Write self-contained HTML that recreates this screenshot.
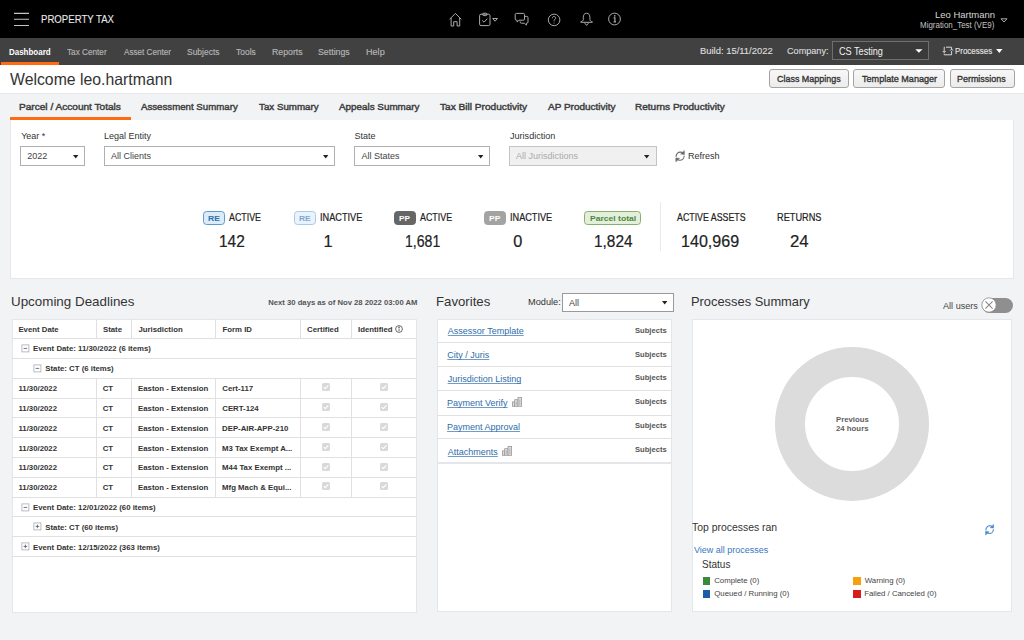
<!DOCTYPE html>
<html><head><meta charset="utf-8"><style>
html,body{margin:0;padding:0;width:1024px;height:640px;overflow:hidden;background:#f2f3f5;font-family:"Liberation Sans",sans-serif}
.r{position:absolute;display:block}
.t{position:absolute;white-space:nowrap;font-family:"Liberation Sans",sans-serif}
</style></head><body>
<div class="r" style="left:0px;top:0px;width:1024px;height:38px;background:#000"></div>
<svg class="r" style="left:13px;top:11px" width="17" height="16" viewBox="0 0 17 16" stroke="#c4c4c4" stroke-width="1.1"><path d="M1 2.4 H16 M1 8.3 H16 M1 14.5 H16"/></svg>
<span class="t" style="left:40.98px;top:15.00px;font-size:10.0px;line-height:10.0px;color:#e8e8e8;font-weight:400;transform:scaleX(0.9606);transform-origin:0 0;-webkit-text-stroke:0.1px #e8e8e8">PROPERTY TAX</span>
<svg class="r" style="left:448px;top:12px" width="16" height="16" viewBox="0 0 16 16" fill="none" stroke="#a9a9a9" stroke-width="1" stroke-linejoin="round"><path d="M1.5 7.3 L7.4 1.4 L13.3 7.3 M3.1 5.9 V14 H5.7 V9.7 H9.1 V14 H11.7 V5.9"/></svg>
<svg class="r" style="left:477px;top:12px" width="24" height="16" viewBox="0 0 24 16" fill="none" stroke="#a9a9a9" stroke-width="1"><rect x="2.6" y="2.2" width="10.4" height="11.4" rx="1.4"/><rect x="5.6" y="1.2" width="4.4" height="2.4" rx="1.2"/><path d="M5.2 8.4 L7 10.2 L10.3 6.7"/><path d="M15.7 6.5 H20.5 L18.1 9.2 Z"/></svg>
<svg class="r" style="left:514px;top:12px" width="16" height="16" viewBox="0 0 16 16" fill="none" stroke="#a9a9a9" stroke-width="1" stroke-linejoin="round"><path d="M2.4 1.4 H9.3 Q10.5 1.4 10.5 2.6 V7 Q10.5 8.2 9.3 8.2 H5 L3.1 10.1 V8.2 H2.4 Q1.2 8.2 1.2 7 V2.6 Q1.2 1.4 2.4 1.4 Z"/><path d="M10.9 4.4 H12.8 Q14 4.4 14 5.6 V10 Q14 11.2 12.8 11.2 H12.4 V13.2 L10.4 11.2 H7.4 Q6.2 11.2 6.2 10 V9.4"/></svg>
<svg class="r" style="left:546px;top:12px" width="16" height="16" viewBox="0 0 16 16" fill="none" stroke="#a9a9a9" stroke-width="1"><circle cx="8.1" cy="7.9" r="5.8"/><path d="M6.4 6.2 C6.4 5 7.1 4.5 8 4.5 C9 4.5 9.7 5.2 9.7 6 C9.7 7.1 8.2 7.4 8.1 8.6 V9.3"/><circle cx="8.1" cy="11" r="0.55" fill="#a9a9a9" stroke="none"/></svg>
<svg class="r" style="left:579px;top:12px" width="16" height="16" viewBox="0 0 16 16" fill="none" stroke="#a9a9a9" stroke-width="1" stroke-linejoin="round"><path d="M7.6 1.2 C5.2 1.2 4.3 3.2 4.3 5.4 V7.6 C4.3 8.6 3.2 9.4 2 9.7 C1.4 9.9 1.6 10.3 2.2 10.3 H13 C13.6 10.3 13.8 9.9 13.2 9.7 C12 9.4 10.9 8.6 10.9 7.6 V5.4 C10.9 3.2 10 1.2 7.6 1.2 Z"/><path d="M6 10.4 V11.4 L7.6 13.4 L9.2 11.4 V10.4"/></svg>
<svg class="r" style="left:607px;top:12px" width="16" height="16" viewBox="0 0 16 16" fill="none" stroke="#a9a9a9" stroke-width="1"><circle cx="7.5" cy="7" r="5.9"/><path d="M6.6 5.9 H7.9 V9.9 M6.6 9.9 H9" stroke-width="1.2"/><circle cx="7.7" cy="3.9" r="0.8" fill="#a9a9a9" stroke="none"/></svg>
<span class="t" style="left:934.54px;top:11.00px;font-size:9.3px;line-height:9.3px;color:#d6d6d6;font-weight:400;transform:scaleX(1.0197);transform-origin:0 0;">Leo Hartmann</span>
<span class="t" style="left:920.16px;top:21.00px;font-size:8.3px;line-height:8.3px;color:#c2c2c2;font-weight:400;transform:scaleX(0.9591);transform-origin:0 0;">Migration_Test (VE9)</span>
<svg class="r" style="left:1000px;top:18px" width="8" height="5" viewBox="0 0 8 5" fill="none" stroke="#aaa" stroke-width="1"><path d="M1 0.8 H7 L4 4 Z"/></svg>
<div class="r" style="left:0px;top:38px;width:1024px;height:27px;background:#414141"></div>
<span class="t" style="left:8.88px;top:47.00px;font-size:9.6px;line-height:9.6px;color:#fff;font-weight:700;transform:scaleX(0.8309);transform-origin:0 0;">Dashboard</span>
<div class="r" style="left:1px;top:62px;width:58px;height:3px;background:#ff6a13"></div>
<span class="t" style="left:66.94px;top:47.00px;font-size:9.6px;line-height:9.6px;color:#b6b6b6;font-weight:400;transform:scaleX(0.8550);transform-origin:0 0;-webkit-text-stroke:0.15px #b6b6b6">Tax Center</span>
<span class="t" style="left:123.60px;top:47.00px;font-size:9.6px;line-height:9.6px;color:#b6b6b6;font-weight:400;transform:scaleX(0.8482);transform-origin:0 0;-webkit-text-stroke:0.15px #b6b6b6">Asset Center</span>
<span class="t" style="left:187.12px;top:47.00px;font-size:9.6px;line-height:9.6px;color:#b6b6b6;font-weight:400;transform:scaleX(0.8822);transform-origin:0 0;-webkit-text-stroke:0.15px #b6b6b6">Subjects</span>
<span class="t" style="left:236.13px;top:47.00px;font-size:9.6px;line-height:9.6px;color:#b6b6b6;font-weight:400;transform:scaleX(0.8818);transform-origin:0 0;-webkit-text-stroke:0.15px #b6b6b6">Tools</span>
<span class="t" style="left:271.70px;top:47.00px;font-size:9.6px;line-height:9.6px;color:#b6b6b6;font-weight:400;transform:scaleX(0.9109);transform-origin:0 0;-webkit-text-stroke:0.15px #b6b6b6">Reports</span>
<span class="t" style="left:318.20px;top:47.00px;font-size:9.6px;line-height:9.6px;color:#b6b6b6;font-weight:400;transform:scaleX(0.9164);transform-origin:0 0;-webkit-text-stroke:0.15px #b6b6b6">Settings</span>
<span class="t" style="left:365.77px;top:47.00px;font-size:9.6px;line-height:9.6px;color:#b6b6b6;font-weight:400;transform:scaleX(0.9475);transform-origin:0 0;-webkit-text-stroke:0.15px #b6b6b6">Help</span>
<span class="t" style="left:700.04px;top:46.00px;font-size:9.4px;line-height:9.4px;color:#dadada;font-weight:400;transform:scaleX(1.0049);transform-origin:0 0;-webkit-text-stroke:0.15px #dadada">Build: 15/11/2022</span>
<span class="t" style="left:787.04px;top:46.00px;font-size:9.4px;line-height:9.4px;color:#dadada;font-weight:400;transform:scaleX(0.9711);transform-origin:0 0;-webkit-text-stroke:0.15px #dadada">Company:</span>
<div class="r" style="left:832px;top:41px;width:97px;height:19px;background:#3a3a3a;border:1px solid #6e6e6e;box-sizing:border-box"></div>
<span class="t" style="left:839.14px;top:46.00px;font-size:10.6px;line-height:10.6px;color:#f2f2f2;font-weight:400;transform:scaleX(0.8611);transform-origin:0 0;">CS Testing</span>
<svg class="r" style="left:914.5px;top:48.5px" width="8" height="4" viewBox="0 0 8 4"><path d="M0.3 0.2 H7.5 L3.9 3.8 Z" fill="#fff"/></svg>
<svg class="r" style="left:941px;top:45px" width="13" height="12" viewBox="0 0 13 12" fill="none" stroke="#d8d8d8" stroke-width="1"><path d="M5 2.2 H10.6 V4.6 M10.6 6 V9.8 H3.2 V8.6 M3.2 7.2 V2.2 H3.8"/><path d="M1.8 6 L3.2 7.6 L4.6 6 M9.2 5.6 L10.6 4 L12 5.6"/></svg>
<span class="t" style="left:955.06px;top:46.00px;font-size:9.5px;line-height:9.5px;color:#e0e0e0;font-weight:400;transform:scaleX(0.8366);transform-origin:0 0;-webkit-text-stroke:0.15px #e8e8e8">Processes</span>
<svg class="r" style="left:996px;top:48.8px" width="7" height="4" viewBox="0 0 7 4"><path d="M0.1 0 H6.5 L3.3 3.9 Z" fill="#fff"/></svg>
<div class="r" style="left:0px;top:65px;width:1024px;height:28px;background:#fff"></div>
<span class="t" style="left:9.72px;top:71.00px;font-size:16.5px;line-height:16.5px;color:#333;font-weight:400;transform:scaleX(0.9583);transform-origin:0 0;">Welcome leo.hartmann</span>
<div class="r" style="left:769px;top:69.2px;width:80px;height:18.799999999999997px;background:linear-gradient(#f7f7f7,#ececec);border:1px solid #a3a3a3;border-radius:3px;box-sizing:border-box"></div>
<span class="t" style="left:777.05px;top:74.00px;font-size:9.8px;line-height:9.8px;color:#333;font-weight:400;transform:scaleX(0.9130);transform-origin:0 0;-webkit-text-stroke:0.35px #333">Class Mappings</span>
<div class="r" style="left:852.8px;top:69.2px;width:92.30000000000007px;height:18.799999999999997px;background:linear-gradient(#f7f7f7,#ececec);border:1px solid #a3a3a3;border-radius:3px;box-sizing:border-box"></div>
<span class="t" style="left:861.62px;top:74.00px;font-size:9.8px;line-height:9.8px;color:#333;font-weight:400;transform:scaleX(0.9257);transform-origin:0 0;-webkit-text-stroke:0.35px #333">Template Manager</span>
<div class="r" style="left:950px;top:69.2px;width:64.70000000000005px;height:18.799999999999997px;background:linear-gradient(#f7f7f7,#ececec);border:1px solid #a3a3a3;border-radius:3px;box-sizing:border-box"></div>
<span class="t" style="left:957.28px;top:74.00px;font-size:9.8px;line-height:9.8px;color:#333;font-weight:400;transform:scaleX(0.9132);transform-origin:0 0;-webkit-text-stroke:0.35px #333">Permissions</span>
<div class="r" style="left:0px;top:93px;width:1024px;height:547px;background:#f2f3f5"></div>
<div class="r" style="left:0px;top:93px;width:1024px;height:1px;background:#e9eaed"></div>
<span class="t" style="left:18.99px;top:102.00px;font-size:9.8px;line-height:9.8px;color:#404040;font-weight:400;transform:scaleX(1.0301);transform-origin:0 0;-webkit-text-stroke:0.45px #404040">Parcel / Account Totals</span>
<span class="t" style="left:141.40px;top:102.00px;font-size:9.8px;line-height:9.8px;color:#404040;font-weight:400;transform:scaleX(0.9873);transform-origin:0 0;-webkit-text-stroke:0.45px #404040">Assessment Summary</span>
<span class="t" style="left:258.80px;top:102.00px;font-size:9.8px;line-height:9.8px;color:#404040;font-weight:400;transform:scaleX(0.9961);transform-origin:0 0;-webkit-text-stroke:0.45px #404040">Tax Summary</span>
<span class="t" style="left:339.00px;top:102.00px;font-size:9.8px;line-height:9.8px;color:#404040;font-weight:400;transform:scaleX(1.0054);transform-origin:0 0;-webkit-text-stroke:0.45px #404040">Appeals Summary</span>
<span class="t" style="left:439.80px;top:102.00px;font-size:9.8px;line-height:9.8px;color:#404040;font-weight:400;transform:scaleX(1.0329);transform-origin:0 0;-webkit-text-stroke:0.45px #404040">Tax Bill Productivity</span>
<span class="t" style="left:547.50px;top:102.00px;font-size:9.8px;line-height:9.8px;color:#404040;font-weight:400;transform:scaleX(1.0189);transform-origin:0 0;-webkit-text-stroke:0.45px #404040">AP Productivity</span>
<span class="t" style="left:634.70px;top:102.00px;font-size:9.8px;line-height:9.8px;color:#404040;font-weight:400;transform:scaleX(1.0239);transform-origin:0 0;-webkit-text-stroke:0.45px #404040">Returns Productivity</span>
<div class="r" style="left:9.6px;top:116.8px;width:121.70000000000002px;height:3.0px;background:#ff6a13"></div>
<div class="r" style="left:10px;top:120px;width:1004px;height:159px;background:#fff;border:1px solid #e6e7ea;border-top:none;box-sizing:border-box"></div>
<span class="t" style="left:21.17px;top:132.00px;font-size:9.0px;line-height:9.0px;color:#333;font-weight:400;">Year *</span>
<span class="t" style="left:103.98px;top:132.00px;font-size:9.0px;line-height:9.0px;color:#333;font-weight:400;">Legal Entity</span>
<span class="t" style="left:354.40px;top:132.00px;font-size:9.0px;line-height:9.0px;color:#333;font-weight:400;">State</span>
<span class="t" style="left:509.66px;top:132.00px;font-size:9.0px;line-height:9.0px;color:#333;font-weight:400;transform:scaleX(1.0072);transform-origin:0 0;">Jurisdiction</span>
<div class="r" style="left:20px;top:146px;width:65px;height:20px;background:#fff;border:1px solid #b0b0b0;box-sizing:border-box"></div>
<span class="t" style="left:27.15px;top:152.00px;font-size:9.0px;line-height:9.0px;color:#444;font-weight:400;">2022</span>
<svg class="r" style="left:72.6px;top:155px" width="6" height="4" viewBox="0 0 6 4"><path d="M0 0 H5.4 L2.7 3.4 Z" fill="#222"/></svg>
<div class="r" style="left:104px;top:146px;width:231px;height:20px;background:#fff;border:1px solid #b0b0b0;box-sizing:border-box"></div>
<span class="t" style="left:111.00px;top:152.00px;font-size:9.0px;line-height:9.0px;color:#444;font-weight:400;">All Clients</span>
<svg class="r" style="left:322.5px;top:155px" width="6" height="4" viewBox="0 0 6 4"><path d="M0 0 H5.4 L2.7 3.4 Z" fill="#222"/></svg>
<div class="r" style="left:354px;top:146px;width:136px;height:20px;background:#fff;border:1px solid #b0b0b0;box-sizing:border-box"></div>
<span class="t" style="left:361.40px;top:152.00px;font-size:9.0px;line-height:9.0px;color:#444;font-weight:400;">All States</span>
<svg class="r" style="left:477.8px;top:155px" width="6" height="4" viewBox="0 0 6 4"><path d="M0 0 H5.4 L2.7 3.4 Z" fill="#222"/></svg>
<div class="r" style="left:509px;top:146px;width:148px;height:20px;background:#f0f0f0;border:1px solid #c4c4c4;box-sizing:border-box"></div>
<span class="t" style="left:516.00px;top:152.00px;font-size:9.0px;line-height:9.0px;color:#aaa;font-weight:400;">All Jurisdictions</span>
<svg class="r" style="left:644px;top:155px" width="6" height="4" viewBox="0 0 6 4"><path d="M0 0 H5.4 L2.7 3.4 Z" fill="#222"/></svg>
<svg class="r" style="left:672px;top:148px" width="16" height="16" viewBox="0 0 16 16" fill="none" stroke="#6a6a6a" stroke-width="1.1" stroke-linecap="round"><path d="M4.1 8.4 C4.1 6 6 4.1 8.3 4.1 C9.5 4.1 10.5 4.6 11.2 5.3"/><path d="M12.3 2.9 L12.4 6.4 L9 6.1 Z" fill="#6a6a6a" stroke-width="0.6" stroke-linejoin="round"/><path d="M12.1 8 C12.1 10.4 10.2 12.3 7.9 12.3 C6.7 12.3 5.7 11.8 5 11.1"/><path d="M3.9 13.5 L3.8 10 L7.2 10.3 Z" fill="#6a6a6a" stroke-width="0.6" stroke-linejoin="round"/></svg>
<span class="t" style="left:687.98px;top:152.00px;font-size:9.0px;line-height:9.0px;color:#333;font-weight:400;transform:scaleX(1.0035);transform-origin:0 0;">Refresh</span>
<div class="r" style="left:202.7px;top:211px;width:22.30000000000001px;height:14px;background:#dcebf8;border:1px solid #5a9bd4;border-radius:3.5px;box-sizing:border-box"></div>
<span class="t" style="left:207.94px;top:215.00px;font-size:7.2px;line-height:7.2px;color:#2f6ea8;font-weight:700;transform:scaleX(1.1889);transform-origin:0 0;">RE</span>
<div class="r" style="left:293.6px;top:211px;width:22.099999999999966px;height:14px;background:#eaf3fb;border:1px solid #a8cbe9;border-radius:3.5px;box-sizing:border-box"></div>
<span class="t" style="left:298.85px;top:215.00px;font-size:7.2px;line-height:7.2px;color:#79a9d6;font-weight:700;transform:scaleX(1.1673);transform-origin:0 0;">RE</span>
<div class="r" style="left:394.3px;top:211px;width:21.69999999999999px;height:14px;background:#666;border:1px solid #666;border-radius:3.5px;box-sizing:border-box"></div>
<span class="t" style="left:399.26px;top:215.00px;font-size:7.2px;line-height:7.2px;color:#fff;font-weight:700;transform:scaleX(1.1471);transform-origin:0 0;">PP</span>
<div class="r" style="left:484px;top:211px;width:22px;height:14px;background:#a3a3a3;border:1px solid #a3a3a3;border-radius:3.5px;box-sizing:border-box"></div>
<span class="t" style="left:488.95px;top:215.00px;font-size:7.2px;line-height:7.2px;color:#fff;font-weight:700;transform:scaleX(1.1808);transform-origin:0 0;">PP</span>
<div class="r" style="left:584.3px;top:211.2px;width:56.90000000000009px;height:14.0px;background:#e4eeda;border:1px solid #84b173;border-radius:3.5px;box-sizing:border-box"></div>
<span class="t" style="left:589.74px;top:215.00px;font-size:8.0px;line-height:8.0px;color:#4b8a3c;font-weight:700;transform:scaleX(1.0694);transform-origin:0 0;">Parcel total</span>
<span class="t" style="left:229.40px;top:213.00px;font-size:10.4px;line-height:10.4px;color:#222;font-weight:400;transform:scaleX(0.8511);transform-origin:0 0;-webkit-text-stroke:0.2px #222">ACTIVE</span>
<span class="t" style="left:319.97px;top:213.00px;font-size:10.4px;line-height:10.4px;color:#222;font-weight:400;transform:scaleX(0.8843);transform-origin:0 0;-webkit-text-stroke:0.2px #222">INACTIVE</span>
<span class="t" style="left:420.30px;top:213.00px;font-size:10.4px;line-height:10.4px;color:#222;font-weight:400;transform:scaleX(0.8565);transform-origin:0 0;-webkit-text-stroke:0.2px #222">ACTIVE</span>
<span class="t" style="left:510.18px;top:213.00px;font-size:10.4px;line-height:10.4px;color:#222;font-weight:400;transform:scaleX(0.8800);transform-origin:0 0;-webkit-text-stroke:0.2px #222">INACTIVE</span>
<span class="t" style="left:676.70px;top:213.00px;font-size:10.4px;line-height:10.4px;color:#222;font-weight:400;transform:scaleX(0.8490);transform-origin:0 0;-webkit-text-stroke:0.2px #222">ACTIVE ASSETS</span>
<span class="t" style="left:776.96px;top:213.00px;font-size:10.4px;line-height:10.4px;color:#222;font-weight:400;transform:scaleX(0.8849);transform-origin:0 0;-webkit-text-stroke:0.2px #222">RETURNS</span>
<span class="t" style="left:218.84px;top:233.00px;font-size:16.3px;line-height:16.3px;color:#222;font-weight:400;transform:scaleX(0.9481);transform-origin:0 0;-webkit-text-stroke:0.2px #222">142</span>
<span class="t" style="left:323.38px;top:233.00px;font-size:16.3px;line-height:16.3px;color:#222;font-weight:400;-webkit-text-stroke:0.2px #222">1</span>
<span class="t" style="left:404.94px;top:233.00px;font-size:16.3px;line-height:16.3px;color:#222;font-weight:400;transform:scaleX(0.8661);transform-origin:0 0;-webkit-text-stroke:0.2px #222">1,681</span>
<span class="t" style="left:513.35px;top:233.00px;font-size:16.3px;line-height:16.3px;color:#222;font-weight:400;-webkit-text-stroke:0.2px #222">0</span>
<span class="t" style="left:594.34px;top:233.00px;font-size:16.3px;line-height:16.3px;color:#222;font-weight:400;transform:scaleX(0.9452);transform-origin:0 0;-webkit-text-stroke:0.2px #222">1,824</span>
<span class="t" style="left:681.49px;top:233.00px;font-size:16.3px;line-height:16.3px;color:#222;font-weight:400;transform:scaleX(0.9883);transform-origin:0 0;-webkit-text-stroke:0.2px #222">140,969</span>
<span class="t" style="left:789.86px;top:233.00px;font-size:16.3px;line-height:16.3px;color:#222;font-weight:400;transform:scaleX(1.0304);transform-origin:0 0;-webkit-text-stroke:0.2px #222">24</span>
<div class="r" style="left:660px;top:202px;width:1px;height:49px;background:#e8e9ed"></div>
<span class="t" style="left:11.00px;top:296.00px;font-size:12.8px;line-height:12.8px;color:#333;font-weight:400;transform:scaleX(1.0457);transform-origin:0 0;">Upcoming Deadlines</span>
<span class="t" style="left:268.20px;top:299.00px;font-size:7.7px;line-height:7.7px;color:#555;font-weight:700;">Next 30 days as of Nov 28 2022 03:00 AM</span>
<div class="r" style="left:11.5px;top:319px;width:405px;height:293.5px;background:#fff;border:1px solid #e4e6ea;box-sizing:border-box"></div>
<div class="r" style="left:12px;top:338.1px;width:404.5px;height:1.0px;background:#e0e0e0"></div>
<div class="r" style="left:12px;top:357.92px;width:404.5px;height:1.0px;background:#e0e0e0"></div>
<div class="r" style="left:12px;top:377.74px;width:404.5px;height:1.0px;background:#e0e0e0"></div>
<div class="r" style="left:12px;top:397.56px;width:404.5px;height:1.0px;background:#e0e0e0"></div>
<div class="r" style="left:12px;top:417.38px;width:404.5px;height:1.0px;background:#e0e0e0"></div>
<div class="r" style="left:12px;top:437.20000000000005px;width:404.5px;height:1.0px;background:#e0e0e0"></div>
<div class="r" style="left:12px;top:457.02000000000004px;width:404.5px;height:1.0px;background:#e0e0e0"></div>
<div class="r" style="left:12px;top:476.84000000000003px;width:404.5px;height:1.0px;background:#e0e0e0"></div>
<div class="r" style="left:12px;top:496.66px;width:404.5px;height:1.0px;background:#e0e0e0"></div>
<div class="r" style="left:12px;top:516.48px;width:404.5px;height:1.0px;background:#e0e0e0"></div>
<div class="r" style="left:12px;top:536.3px;width:404.5px;height:1.0px;background:#e0e0e0"></div>
<div class="r" style="left:12px;top:556.12px;width:404.5px;height:1.0px;background:#e0e0e0"></div>
<div class="r" style="left:96px;top:319px;width:1px;height:19px;background:#e0e0e0"></div>
<div class="r" style="left:96px;top:377.74px;width:1px;height:118.92000000000002px;background:#e0e0e0"></div>
<div class="r" style="left:131px;top:319px;width:1px;height:19px;background:#e0e0e0"></div>
<div class="r" style="left:131px;top:377.74px;width:1px;height:118.92000000000002px;background:#e0e0e0"></div>
<div class="r" style="left:215px;top:319px;width:1px;height:19px;background:#e0e0e0"></div>
<div class="r" style="left:215px;top:377.74px;width:1px;height:118.92000000000002px;background:#e0e0e0"></div>
<div class="r" style="left:300px;top:319px;width:1px;height:19px;background:#e0e0e0"></div>
<div class="r" style="left:300px;top:377.74px;width:1px;height:118.92000000000002px;background:#e0e0e0"></div>
<div class="r" style="left:351px;top:319px;width:1px;height:19px;background:#e0e0e0"></div>
<div class="r" style="left:351px;top:377.74px;width:1px;height:118.92000000000002px;background:#e0e0e0"></div>
<span class="t" style="left:18.39px;top:326.00px;font-size:7.8px;line-height:7.8px;color:#333;font-weight:700;">Event Date</span>
<span class="t" style="left:102.97px;top:326.00px;font-size:7.8px;line-height:7.8px;color:#333;font-weight:700;">State</span>
<span class="t" style="left:138.48px;top:326.00px;font-size:7.8px;line-height:7.8px;color:#333;font-weight:700;">Jurisdiction</span>
<span class="t" style="left:222.49px;top:326.00px;font-size:7.8px;line-height:7.8px;color:#333;font-weight:700;">Form ID</span>
<span class="t" style="left:307.09px;top:326.00px;font-size:7.8px;line-height:7.8px;color:#333;font-weight:700;">Certified</span>
<span class="t" style="left:357.99px;top:326.00px;font-size:7.8px;line-height:7.8px;color:#333;font-weight:700;">Identified</span>
<svg class="r" style="left:395px;top:324.5px" width="8" height="8" viewBox="0 0 8 8" fill="none" stroke="#444" stroke-width="0.8"><circle cx="4" cy="4" r="3.4"/><path d="M4 3.4 V6.2"/><circle cx="4" cy="2.2" r="0.4" fill="#444"/></svg>
<svg class="r" style="left:21px;top:344.1px" width="9" height="9" viewBox="0 0 9 9" fill="none" stroke-width="0.8"><rect x="0.9" y="0.9" width="7" height="7" stroke="#a9a9b9"/><path d="M2.6 4.4 H6.2" stroke="#555"/></svg>
<span class="t" style="left:32.99px;top:345.00px;font-size:7.8px;line-height:7.8px;color:#333;font-weight:700;">Event Date: 11/30/2022 (6 items)</span>
<svg class="r" style="left:33px;top:363.92px" width="9" height="9" viewBox="0 0 9 9" fill="none" stroke-width="0.8"><rect x="0.9" y="0.9" width="7" height="7" stroke="#a9a9b9"/><path d="M2.6 4.4 H6.2" stroke="#555"/></svg>
<span class="t" style="left:45.27px;top:365.00px;font-size:7.8px;line-height:7.8px;color:#333;font-weight:700;">State: CT (6 items)</span>
<span class="t" style="left:18.43px;top:385.00px;font-size:7.8px;line-height:7.8px;color:#333;font-weight:700;">11/30/2022</span>
<span class="t" style="left:102.69px;top:385.00px;font-size:7.8px;line-height:7.8px;color:#333;font-weight:700;">CT</span>
<span class="t" style="left:138.09px;top:385.00px;font-size:7.8px;line-height:7.8px;color:#333;font-weight:700;">Easton - Extension</span>
<span class="t" style="left:222.29px;top:385.00px;font-size:7.8px;line-height:7.8px;color:#333;font-weight:700;">Cert-117</span>
<div class="r" style="left:322px;top:383.25px;width:8px;height:8.0px;background:#d9d9d9;border-radius:1.5px"></div>
<svg class="r" style="left:322px;top:383.25px" width="8" height="8" viewBox="0 0 8 8" fill="none" stroke="#fff" stroke-width="1.1"><path d="M1.7 4.1 L3.3 5.7 L6.3 2.4"/></svg>
<div class="r" style="left:380px;top:383.25px;width:8px;height:8.0px;background:#d9d9d9;border-radius:1.5px"></div>
<svg class="r" style="left:380px;top:383.25px" width="8" height="8" viewBox="0 0 8 8" fill="none" stroke="#fff" stroke-width="1.1"><path d="M1.7 4.1 L3.3 5.7 L6.3 2.4"/></svg>
<span class="t" style="left:18.43px;top:405.00px;font-size:7.8px;line-height:7.8px;color:#333;font-weight:700;">11/30/2022</span>
<span class="t" style="left:102.69px;top:405.00px;font-size:7.8px;line-height:7.8px;color:#333;font-weight:700;">CT</span>
<span class="t" style="left:138.09px;top:405.00px;font-size:7.8px;line-height:7.8px;color:#333;font-weight:700;">Easton - Extension</span>
<span class="t" style="left:222.29px;top:405.00px;font-size:7.8px;line-height:7.8px;color:#333;font-weight:700;">CERT-124</span>
<div class="r" style="left:322px;top:403.07000000000005px;width:8px;height:8.0px;background:#d9d9d9;border-radius:1.5px"></div>
<svg class="r" style="left:322px;top:403.07000000000005px" width="8" height="8" viewBox="0 0 8 8" fill="none" stroke="#fff" stroke-width="1.1"><path d="M1.7 4.1 L3.3 5.7 L6.3 2.4"/></svg>
<div class="r" style="left:380px;top:403.07000000000005px;width:8px;height:8.0px;background:#d9d9d9;border-radius:1.5px"></div>
<svg class="r" style="left:380px;top:403.07000000000005px" width="8" height="8" viewBox="0 0 8 8" fill="none" stroke="#fff" stroke-width="1.1"><path d="M1.7 4.1 L3.3 5.7 L6.3 2.4"/></svg>
<span class="t" style="left:18.43px;top:425.00px;font-size:7.8px;line-height:7.8px;color:#333;font-weight:700;">11/30/2022</span>
<span class="t" style="left:102.69px;top:425.00px;font-size:7.8px;line-height:7.8px;color:#333;font-weight:700;">CT</span>
<span class="t" style="left:138.09px;top:425.00px;font-size:7.8px;line-height:7.8px;color:#333;font-weight:700;">Easton - Extension</span>
<span class="t" style="left:222.09px;top:425.00px;font-size:7.8px;line-height:7.8px;color:#333;font-weight:700;">DEP-AIR-APP-210</span>
<div class="r" style="left:322px;top:422.89000000000004px;width:8px;height:8.0px;background:#d9d9d9;border-radius:1.5px"></div>
<svg class="r" style="left:322px;top:422.89000000000004px" width="8" height="8" viewBox="0 0 8 8" fill="none" stroke="#fff" stroke-width="1.1"><path d="M1.7 4.1 L3.3 5.7 L6.3 2.4"/></svg>
<div class="r" style="left:380px;top:422.89000000000004px;width:8px;height:8.0px;background:#d9d9d9;border-radius:1.5px"></div>
<svg class="r" style="left:380px;top:422.89000000000004px" width="8" height="8" viewBox="0 0 8 8" fill="none" stroke="#fff" stroke-width="1.1"><path d="M1.7 4.1 L3.3 5.7 L6.3 2.4"/></svg>
<span class="t" style="left:18.43px;top:445.00px;font-size:7.8px;line-height:7.8px;color:#333;font-weight:700;">11/30/2022</span>
<span class="t" style="left:102.69px;top:445.00px;font-size:7.8px;line-height:7.8px;color:#333;font-weight:700;">CT</span>
<span class="t" style="left:138.09px;top:445.00px;font-size:7.8px;line-height:7.8px;color:#333;font-weight:700;">Easton - Extension</span>
<span class="t" style="left:222.09px;top:445.00px;font-size:7.8px;line-height:7.8px;color:#333;font-weight:700;">M3 Tax Exempt A...</span>
<div class="r" style="left:322px;top:442.71000000000004px;width:8px;height:8.0px;background:#d9d9d9;border-radius:1.5px"></div>
<svg class="r" style="left:322px;top:442.71000000000004px" width="8" height="8" viewBox="0 0 8 8" fill="none" stroke="#fff" stroke-width="1.1"><path d="M1.7 4.1 L3.3 5.7 L6.3 2.4"/></svg>
<div class="r" style="left:380px;top:442.71000000000004px;width:8px;height:8.0px;background:#d9d9d9;border-radius:1.5px"></div>
<svg class="r" style="left:380px;top:442.71000000000004px" width="8" height="8" viewBox="0 0 8 8" fill="none" stroke="#fff" stroke-width="1.1"><path d="M1.7 4.1 L3.3 5.7 L6.3 2.4"/></svg>
<span class="t" style="left:18.43px;top:464.00px;font-size:7.8px;line-height:7.8px;color:#333;font-weight:700;">11/30/2022</span>
<span class="t" style="left:102.69px;top:464.00px;font-size:7.8px;line-height:7.8px;color:#333;font-weight:700;">CT</span>
<span class="t" style="left:138.09px;top:464.00px;font-size:7.8px;line-height:7.8px;color:#333;font-weight:700;">Easton - Extension</span>
<span class="t" style="left:222.09px;top:464.00px;font-size:7.8px;line-height:7.8px;color:#333;font-weight:700;">M44 Tax Exempt ...</span>
<div class="r" style="left:322px;top:462.5300000000001px;width:8px;height:8.0px;background:#d9d9d9;border-radius:1.5px"></div>
<svg class="r" style="left:322px;top:462.5300000000001px" width="8" height="8" viewBox="0 0 8 8" fill="none" stroke="#fff" stroke-width="1.1"><path d="M1.7 4.1 L3.3 5.7 L6.3 2.4"/></svg>
<div class="r" style="left:380px;top:462.5300000000001px;width:8px;height:8.0px;background:#d9d9d9;border-radius:1.5px"></div>
<svg class="r" style="left:380px;top:462.5300000000001px" width="8" height="8" viewBox="0 0 8 8" fill="none" stroke="#fff" stroke-width="1.1"><path d="M1.7 4.1 L3.3 5.7 L6.3 2.4"/></svg>
<span class="t" style="left:18.43px;top:484.00px;font-size:7.8px;line-height:7.8px;color:#333;font-weight:700;">11/30/2022</span>
<span class="t" style="left:102.69px;top:484.00px;font-size:7.8px;line-height:7.8px;color:#333;font-weight:700;">CT</span>
<span class="t" style="left:138.09px;top:484.00px;font-size:7.8px;line-height:7.8px;color:#333;font-weight:700;">Easton - Extension</span>
<span class="t" style="left:222.09px;top:484.00px;font-size:7.8px;line-height:7.8px;color:#333;font-weight:700;">Mfg Mach &amp; Equi...</span>
<div class="r" style="left:322px;top:482.35px;width:8px;height:8.0px;background:#d9d9d9;border-radius:1.5px"></div>
<svg class="r" style="left:322px;top:482.35px" width="8" height="8" viewBox="0 0 8 8" fill="none" stroke="#fff" stroke-width="1.1"><path d="M1.7 4.1 L3.3 5.7 L6.3 2.4"/></svg>
<div class="r" style="left:380px;top:482.35px;width:8px;height:8.0px;background:#d9d9d9;border-radius:1.5px"></div>
<svg class="r" style="left:380px;top:482.35px" width="8" height="8" viewBox="0 0 8 8" fill="none" stroke="#fff" stroke-width="1.1"><path d="M1.7 4.1 L3.3 5.7 L6.3 2.4"/></svg>
<svg class="r" style="left:21px;top:502.66px" width="9" height="9" viewBox="0 0 9 9" fill="none" stroke-width="0.8"><rect x="0.9" y="0.9" width="7" height="7" stroke="#a9a9b9"/><path d="M2.6 4.4 H6.2" stroke="#555"/></svg>
<span class="t" style="left:32.99px;top:504.00px;font-size:7.8px;line-height:7.8px;color:#333;font-weight:700;">Event Date: 12/01/2022 (60 items)</span>
<svg class="r" style="left:33px;top:522.48px" width="9" height="9" viewBox="0 0 9 9" fill="none" stroke-width="0.8"><rect x="0.9" y="0.9" width="7" height="7" stroke="#a9a9b9"/><path d="M2.6 4.4 H6.2 M4.4 2.6 V6.2" stroke="#555"/></svg>
<span class="t" style="left:45.27px;top:524.00px;font-size:7.8px;line-height:7.8px;color:#333;font-weight:700;">State: CT (60 items)</span>
<svg class="r" style="left:21px;top:542.3px" width="9" height="9" viewBox="0 0 9 9" fill="none" stroke-width="0.8"><rect x="0.9" y="0.9" width="7" height="7" stroke="#a9a9b9"/><path d="M2.6 4.4 H6.2 M4.4 2.6 V6.2" stroke="#555"/></svg>
<span class="t" style="left:32.99px;top:544.00px;font-size:7.8px;line-height:7.8px;color:#333;font-weight:700;">Event Date: 12/15/2022 (363 items)</span>
<span class="t" style="left:435.94px;top:296.00px;font-size:12.6px;line-height:12.6px;color:#333;font-weight:400;transform:scaleX(1.0469);transform-origin:0 0;">Favorites</span>
<span class="t" style="left:528.06px;top:298.00px;font-size:9.0px;line-height:9.0px;color:#333;font-weight:400;transform:scaleX(1.0241);transform-origin:0 0;">Module:</span>
<div class="r" style="left:562px;top:293.2px;width:111.60000000000002px;height:18.80000000000001px;background:#fff;border:1px solid #9a9a9a;box-sizing:border-box"></div>
<span class="t" style="left:569.00px;top:299.00px;font-size:9.0px;line-height:9.0px;color:#444;font-weight:400;">All</span>
<svg class="r" style="left:661.5px;top:301.4px" width="6" height="4" viewBox="0 0 6 4"><path d="M0 0 H5.4 L2.7 3.4 Z" fill="#222"/></svg>
<div class="r" style="left:436.5px;top:318.6px;width:235.5px;height:144.79999999999995px;background:#fff;border:1px solid #e4e6ea;box-sizing:border-box"></div>
<div class="r" style="left:436.5px;top:463.4px;width:235.5px;height:149.0px;background:#fff;border:1px solid #e4e6ea;box-sizing:border-box"></div>
<div class="r" style="left:437px;top:342.3px;width:235px;height:1.0px;background:#e0e0e0"></div>
<div class="r" style="left:437px;top:366px;width:235px;height:1px;background:#e0e0e0"></div>
<div class="r" style="left:437px;top:389.8px;width:235px;height:1.0px;background:#e0e0e0"></div>
<div class="r" style="left:437px;top:414.5px;width:235px;height:1.0px;background:#e0e0e0"></div>
<div class="r" style="left:437px;top:438.2px;width:235px;height:1.0px;background:#e0e0e0"></div>
<span class="t" style="left:447.80px;top:327.00px;font-size:9.0px;line-height:9.0px;color:#2f6ca8;font-weight:400;text-decoration:underline;text-underline-offset:1px;text-decoration-color:#6f9ccb;text-decoration-skip-ink:none">Assessor Template</span>
<span class="t" style="left:634.67px;top:327.00px;font-size:8.0px;line-height:8.0px;color:#555;font-weight:700;transform:scaleX(0.9493);transform-origin:0 0;">Subjects</span>
<span class="t" style="left:447.35px;top:351.00px;font-size:9.0px;line-height:9.0px;color:#2f6ca8;font-weight:400;text-decoration:underline;text-underline-offset:1px;text-decoration-color:#6f9ccb;text-decoration-skip-ink:none">City / Juris</span>
<span class="t" style="left:634.67px;top:351.00px;font-size:8.0px;line-height:8.0px;color:#555;font-weight:700;transform:scaleX(0.9493);transform-origin:0 0;">Subjects</span>
<span class="t" style="left:447.67px;top:375.00px;font-size:9.0px;line-height:9.0px;color:#2f6ca8;font-weight:400;text-decoration:underline;text-underline-offset:1px;text-decoration-color:#6f9ccb;text-decoration-skip-ink:none">Jurisdiction Listing</span>
<span class="t" style="left:634.67px;top:374.00px;font-size:8.0px;line-height:8.0px;color:#555;font-weight:700;transform:scaleX(0.9493);transform-origin:0 0;">Subjects</span>
<span class="t" style="left:447.08px;top:399.00px;font-size:9.0px;line-height:9.0px;color:#2f6ca8;font-weight:400;text-decoration:underline;text-underline-offset:1px;text-decoration-color:#6f9ccb;text-decoration-skip-ink:none">Payment Verify</span>
<span class="t" style="left:634.67px;top:398.00px;font-size:8.0px;line-height:8.0px;color:#555;font-weight:700;transform:scaleX(0.9493);transform-origin:0 0;">Subjects</span>
<svg class="r" style="left:512.2px;top:397.4px" width="10" height="10" viewBox="0 0 10 10" fill="#dedede" stroke="#999" stroke-width="0.8"><rect x="0.5" y="4.9" width="2.2" height="4.4"/><rect x="2.7" y="2.7" width="3.3" height="6.6"/><rect x="6" y="0.5" width="3.6" height="8.8"/><path d="M4.3 4.6 V8 M7.8 2.4 V8" stroke="#aaa"/></svg>
<span class="t" style="left:447.08px;top:423.00px;font-size:9.0px;line-height:9.0px;color:#2f6ca8;font-weight:400;text-decoration:underline;text-underline-offset:1px;text-decoration-color:#6f9ccb;text-decoration-skip-ink:none">Payment Approval</span>
<span class="t" style="left:634.67px;top:422.00px;font-size:8.0px;line-height:8.0px;color:#555;font-weight:700;transform:scaleX(0.9493);transform-origin:0 0;">Subjects</span>
<span class="t" style="left:447.80px;top:448.00px;font-size:9.0px;line-height:9.0px;color:#2f6ca8;font-weight:400;text-decoration:underline;text-underline-offset:1px;text-decoration-color:#6f9ccb;text-decoration-skip-ink:none">Attachments</span>
<span class="t" style="left:634.67px;top:446.00px;font-size:8.0px;line-height:8.0px;color:#555;font-weight:700;transform:scaleX(0.9493);transform-origin:0 0;">Subjects</span>
<svg class="r" style="left:501.8px;top:446.3px" width="10" height="10" viewBox="0 0 10 10" fill="#dedede" stroke="#999" stroke-width="0.8"><rect x="0.5" y="4.9" width="2.2" height="4.4"/><rect x="2.7" y="2.7" width="3.3" height="6.6"/><rect x="6" y="0.5" width="3.6" height="8.8"/><path d="M4.3 4.6 V8 M7.8 2.4 V8" stroke="#aaa"/></svg>
<span class="t" style="left:690.97px;top:295.00px;font-size:13.0px;line-height:13.0px;color:#333;font-weight:400;transform:scaleX(0.9900);transform-origin:0 0;">Processes Summary</span>
<span class="t" style="left:942.70px;top:301.00px;font-size:9.5px;line-height:9.5px;color:#444;font-weight:400;transform:scaleX(0.9584);transform-origin:0 0;">All users</span>
<div class="r" style="left:982px;top:297.5px;width:30.5px;height:15.0px;background:#8f8f8f;border-radius:8px"></div>
<svg class="r" style="left:981px;top:297px" width="16" height="16" viewBox="0 0 16 16"><circle cx="8" cy="8" r="7.2" fill="#fff" stroke="#8a8a8a" stroke-width="0.8"/><path d="M4.4 4.4 L11.6 11.6 M11.6 4.4 L4.4 11.6" stroke="#888" stroke-width="1.1"/></svg>
<div class="r" style="left:692px;top:318.6px;width:320.29999999999995px;height:293.79999999999995px;background:#fff;border:1px solid #e4e6ea;box-sizing:border-box"></div>
<svg class="r" style="left:775px;top:347.4px" width="154" height="154" viewBox="0 0 154 154"><circle cx="77" cy="77" r="62" fill="none" stroke="#dcdcdc" stroke-width="30"/></svg>
<span class="t" style="left:835.70px;top:416.00px;font-size:8.0px;line-height:8.0px;color:#606060;font-weight:700;transform:scaleX(0.9678);transform-origin:0 0;">Previous</span>
<span class="t" style="left:835.93px;top:425.00px;font-size:8.0px;line-height:8.0px;color:#606060;font-weight:700;transform:scaleX(0.9749);transform-origin:0 0;">24 hours</span>
<span class="t" style="left:692.19px;top:522.00px;font-size:11.3px;line-height:11.3px;color:#333;font-weight:400;transform:scaleX(0.9227);transform-origin:0 0;">Top processes ran</span>
<svg class="r" style="left:982.3px;top:522.3px" width="15" height="15" viewBox="0 0 16 16" fill="none" stroke="#4a86c8" stroke-width="1.1" stroke-linecap="round"><path d="M4.1 8.4 C4.1 6 6 4.1 8.3 4.1 C9.5 4.1 10.5 4.6 11.2 5.3"/><path d="M12.3 2.9 L12.4 6.4 L9 6.1 Z" fill="#4a86c8" stroke-width="0.6" stroke-linejoin="round"/><path d="M12.1 8 C12.1 10.4 10.2 12.3 7.9 12.3 C6.7 12.3 5.7 11.8 5 11.1"/><path d="M3.9 13.5 L3.8 10 L7.2 10.3 Z" fill="#4a86c8" stroke-width="0.6" stroke-linejoin="round"/></svg>
<span class="t" style="left:694.06px;top:545.00px;font-size:9.7px;line-height:9.7px;color:#3877c0;font-weight:400;transform:scaleX(0.9263);transform-origin:0 0;">View all processes</span>
<span class="t" style="left:702.35px;top:560.00px;font-size:10.3px;line-height:10.3px;color:#333;font-weight:400;transform:scaleX(0.9726);transform-origin:0 0;">Status</span>
<div class="r" style="left:702.8px;top:577px;width:7.5px;height:7.5px;background:#3a8a3a"></div>
<span class="t" style="left:714.21px;top:577.00px;font-size:7.8px;line-height:7.8px;color:#444;font-weight:400;">Complete (0)</span>
<div class="r" style="left:702.8px;top:590px;width:7.5px;height:7.5px;background:#1b5fa8"></div>
<span class="t" style="left:714.25px;top:590.00px;font-size:7.8px;line-height:7.8px;color:#444;font-weight:400;">Queued / Running (0)</span>
<div class="r" style="left:853px;top:577px;width:7.5px;height:7.5px;background:#f5a00f"></div>
<span class="t" style="left:864.76px;top:577.00px;font-size:7.8px;line-height:7.8px;color:#444;font-weight:400;">Warning (0)</span>
<div class="r" style="left:853px;top:590px;width:7.5px;height:7.5px;background:#d81b1b"></div>
<span class="t" style="left:864.18px;top:590.00px;font-size:7.8px;line-height:7.8px;color:#444;font-weight:400;">Failed / Canceled (0)</span>
</body></html>
